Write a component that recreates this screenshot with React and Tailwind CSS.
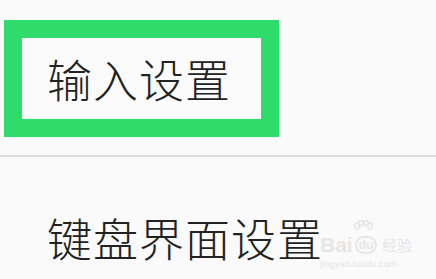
export default function App() {
  return (
    <div className="w-[436px] h-[279px] overflow-hidden bg-[#fafafa] font-['Noto_Sans_CJK_SC',sans-serif] text-[#222]">
      <div className="pt-[20px] pl-[4px]">
        <div className="w-[275px] h-[117px] border-[18px] border-[#2fdc6b] bg-[#fbfbfb] flex items-center pl-[25px]">
          <span className="text-[45px] leading-none font-light tracking-[1px]">输入设置</span>
        </div>
      </div>
      <div className="mt-[18px] h-[2px] bg-[#dedede]" />
      <div className="flex items-center pl-[47px] pt-[58px] relative">
        <span className="text-[45px] leading-none font-light tracking-[1px]">键盘界面设置</span>
        <div className="absolute left-[320px] top-[63px] flex flex-col items-start text-[#e6e6e6] font-['Liberation_Sans',sans-serif] leading-none">
          <svg width="22" height="16" viewBox="0 0 22 16" className="ml-[32px]" fill="none" stroke="#e6e6e6" strokeWidth="1.6">
            <ellipse cx="5" cy="6" rx="2.2" ry="3" />
            <ellipse cx="9" cy="3" rx="2.2" ry="2.6" />
            <ellipse cx="14" cy="3" rx="2.2" ry="2.6" />
            <ellipse cx="18" cy="6" rx="2.2" ry="3" />
          </svg>
          <div className="flex items-center gap-[2px] -mt-[2px]">
            <span className="text-[21px] font-bold">Bai</span>
            <span className="text-[12px] font-bold border-2 border-[#e6e6e6] rounded-full px-[2px] py-[1px]">du</span>
            <span className="text-[15px] ml-[3px] font-['Noto_Sans_CJK_SC',sans-serif]">经验</span>
          </div>
          <span className="text-[9.5px] mt-[4px]">jingyan.baidu.com</span>
        </div>
      </div>
    </div>
  );
}
